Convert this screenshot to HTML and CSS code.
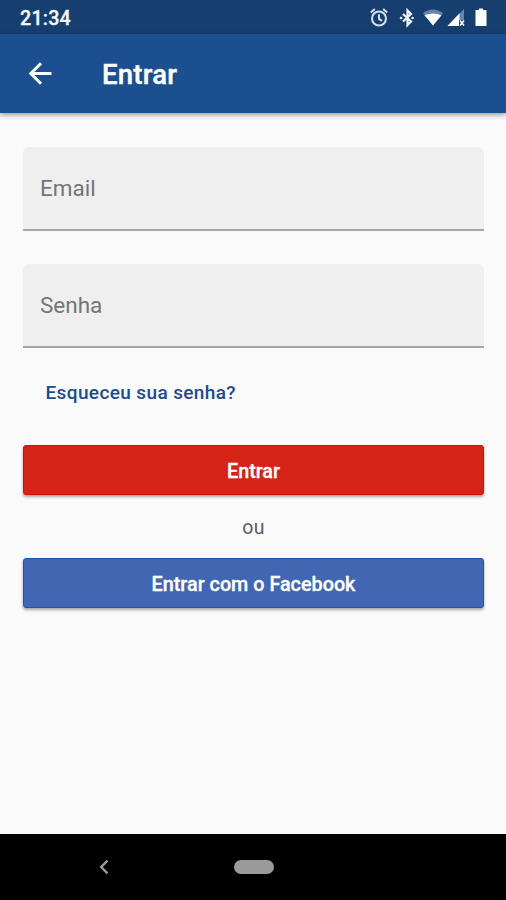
FILE: index.html
```html
<!DOCTYPE html>
<html lang="pt-BR">
<head>
<meta charset="utf-8">
<meta name="viewport" content="width=device-width, initial-scale=1">
<title>Entrar</title>
<link rel="stylesheet" href="styles.css">
</head>
<body>
<div class="screen">
  <div class="status-bar">
    <span class="clock">21:34</span>
    <svg class="status-icons" width="118" height="24" viewBox="0 0 118 24" fill="none">
      <g stroke="#d5e0f0" stroke-width="2">
        <circle cx="9" cy="12.500" r="7"/>
        <path d="M9 8.200v4.700l3 2M.8 6.400l4-3.400M17.200 6.400l-4-3.400"/>
      </g>
      <path d="M35.500 8l8 7.500-3.500 3.500V4.500l3.500 3.500-8 7.500" transform="translate(-2.500)" stroke="#f0f4fb" stroke-width="2.200"/>
      <path d="M31 12h.1M42.500 12h.1" stroke="#e0e9f5" stroke-width="2.600" stroke-linecap="round"/>
      <path d="M53 7.300Q63 -.2 73 7.300L63 19.500z" fill="#6684af"/>
      <path d="M54.500 9.300Q63 5.500 71.500 9.300L63 19.500z" fill="#fff"/>
      <path d="M94 3v17H77.500z" fill="#6684af"/>
      <path d="M89.500 7.300V20H77.500z" fill="#fff"/>
      <path d="M89 14h5.500V20.500H89z" fill="#173f70"/>
      <path d="M90 14.500l4 5m0-5l-4 5" stroke="#fff" stroke-width="1.600"/>
      <path d="M105.500 4h3.500V2.500h4V4h3.500v16h-11z" fill="#fff"/>
    </svg>
  </div>
  <header class="app-bar">
    <svg class="back" width="24" height="24" viewBox="0 0 24 24" fill="none" stroke="#fff" stroke-width="3"><path d="M23.500 11.500H3M13 1.300L2.800 11.500 13 21.700"/></svg>
    <h1 class="title">Entrar</h1>
  </header>
  <main class="content">
    <div class="field">Email</div>
    <div class="field">Senha</div>
    <a class="forgot">Esqueceu sua senha?</a>
    <button class="button login">Entrar</button>
    <p class="or">ou</p>
    <button class="button facebook">Entrar com o Facebook</button>
  </main>
  <nav class="nav-bar">
    <svg class="nav-back" width="10" height="16" viewBox="0 0 10 16" fill="none" stroke="#999" stroke-width="2.400"><path d="M8.500 1.700L2.200 8l6.300 6.300"/></svg>
    <span class="home"></span>
  </nav>
</div>
</body>
</html>
```
FILE: styles.css
```css
* { box-sizing: border-box; }
body { margin: 0; font-family: Roboto, "Liberation Sans", sans-serif; }
.screen { display: flex; flex-direction: column; width: 506px; height: 900px; background: #fafafa; }
.status-bar { display: flex; align-items: center; justify-content: space-between; height: 34px; padding: 1px 18px 0 20px; background: #163e6e; }
.clock { margin-top: 2px; color: #f4f7fd; font-size: 19.700px; font-weight: 500; line-height: 24px; letter-spacing: .2px; -webkit-text-stroke: .3px; }
.app-bar { display: flex; align-items: center; gap: 50px; height: 79px; padding: 0 28px; background: #1c4f90; box-shadow: 0 2px 5px rgba(0, 0, 0, .38); }
.title { margin: 2px 0 0; color: #fff; font-size: 27.500px; font-weight: 500; letter-spacing: .25px; -webkit-text-stroke: .4px; }
.content { flex: 1; display: flex; flex-direction: column; padding: 34px 22px 0 23px; }
.field { height: 84px; margin-bottom: 33px; padding-left: 17px; border-bottom: 2px solid #a6a6a6; border-radius: 6px 6px 0 0; background: #efefef; color: #757575; font-size: 22.500px; line-height: 83px; }
.forgot { align-self: flex-start; height: 24px; margin: 0 0 40px 22.500px; color: #1f4b8c; font-size: 19px; font-weight: 500; line-height: 24px; letter-spacing: .38px; }
.button { height: 50px; padding: 3px 0 0; border: 0; border-radius: 3px; color: #fff; font: 500 19.800px Roboto, "Liberation Sans", sans-serif; -webkit-text-stroke: .3px; box-shadow: 0 2px 3px rgba(0, 0, 0, .34); }
.login { border: 1px solid #cf0f09; background: #d52417; }
.facebook { border: 1px solid #1f55a8; background: #4267b2; }
.or { margin: 0; height: 63px; color: #5c5c5c; font-size: 19.500px; line-height: 66px; text-align: center; letter-spacing: .4px; }
.nav-bar { display: flex; align-items: center; height: 66px; padding-left: 99px; background: #000; }
.home { width: 40px; height: 14px; margin-left: 125px; border-radius: 7px; background: #9b9b9b; }
```
